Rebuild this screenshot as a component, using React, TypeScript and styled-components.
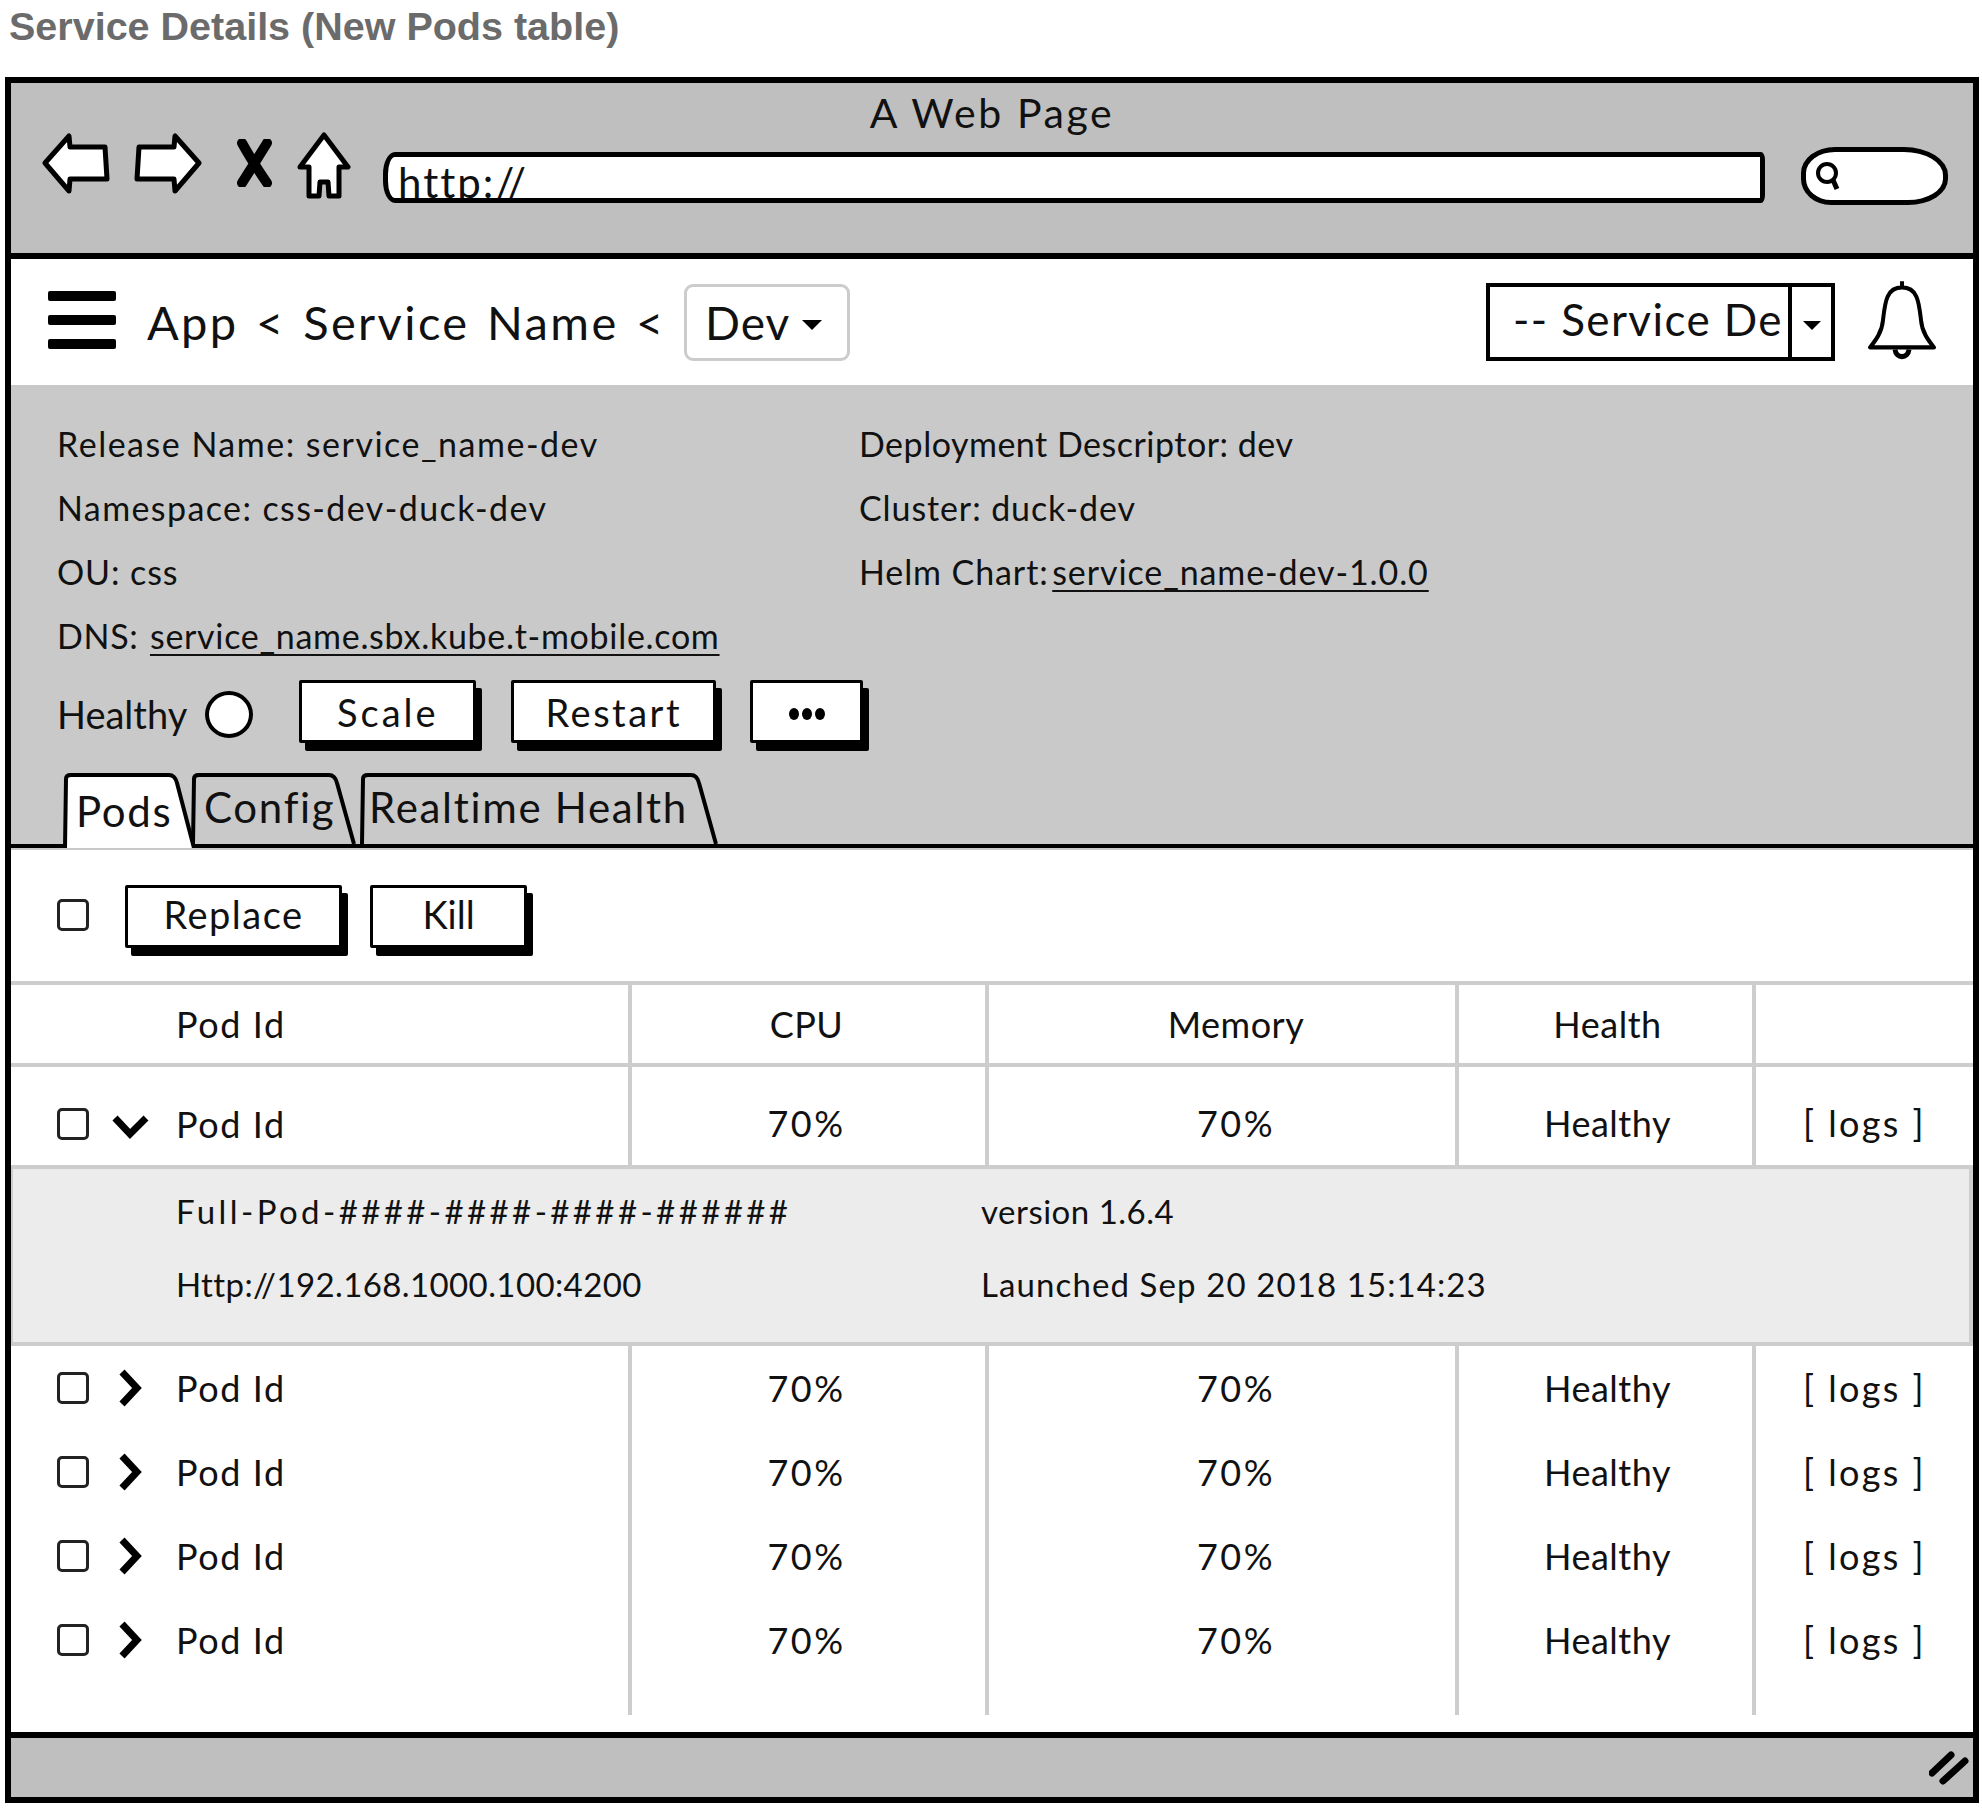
import React from 'react'
import styled, { createGlobalStyle } from 'styled-components'

const COLUMNS = '621px 357px 470px 297px 1fr'
const INK = '#111111'
const RULE = '#cdcdcd'

const GlobalStyle = createGlobalStyle`
    html, body {
        margin: 0;
        padding: 0;
        background: #ffffff;
    }
    body {
        font-family: Lato, 'Liberation Sans', sans-serif;
        color: ${INK};
    }
`

const Page = styled.div`
    width: 1982px;
    height: 1808px;
    padding: 0 3px 0 5px;
    box-sizing: border-box;
`

const PageTitle = styled.h1`
    margin: 0;
    height: 77px;
    padding: 4px 0 0 4px;
    box-sizing: border-box;
    font-family: 'Liberation Sans', Arial, sans-serif;
    font-size: 39.5px;
    line-height: 44px;
    font-weight: 700;
    color: #6b6b6b;
`

const Frame = styled.div`
    height: 1726px;
    border: 6px solid #000000;
    box-sizing: border-box;
    display: flex;
    flex-direction: column;
    background: #ffffff;
`

const BrowserBar = styled.div`
    height: 176px;
    flex: none;
    box-sizing: border-box;
    background: #bfbfbf;
    border-bottom: 6px solid #000000;
`

const BrowserTitle = styled.div`
    padding-top: 10px;
    height: 50px;
    box-sizing: border-box;
    text-align: center;
    font-size: 41px;
    line-height: 40px;
    letter-spacing: 2.6px;
`

const NavRow = styled.div`
    display: flex;
    align-items: flex-start;
    padding-left: 31px;
`

const NavIcon = styled.svg<{ $left: number; $top: number }>`
    flex: none;
    margin-left: ${({ $left }) => $left}px;
    margin-top: ${({ $top }) => $top}px;
`

const UrlBar = styled.div`
    width: 1382px;
    height: 51px;
    margin: 19px 0 0 32px;
    flex: none;
    box-sizing: border-box;
    background: #ffffff;
    border: 5px solid #000000;
    border-radius: 12px 4px 4px 12px / 22px 8px 8px 22px;
    overflow: hidden;
    padding-left: 10px;
    font-size: 42px;
    line-height: 50px;
    letter-spacing: 2px;
`

const SearchPill = styled.div`
    width: 147px;
    height: 58px;
    margin: 14px 0 0 36px;
    flex: none;
    box-sizing: border-box;
    background: #ffffff;
    border: 5px solid #000000;
    border-radius: 34px 44px 40px 30px / 26px 28px 26px 26px;
    display: flex;
    align-items: center;
    padding-left: 8px;
`

const AppHeader = styled.div`
    height: 126px;
    flex: none;
    box-sizing: border-box;
    display: flex;
    align-items: center;
    padding: 0 35px 0 37px;
`

const MenuButton = styled.div`
    width: 68px;
    display: flex;
    flex-direction: column;
    gap: 14px;
    margin: 0 31px 5px 0;
`

const MenuBar = styled.span`
    display: block;
    height: 10px;
    border-radius: 2px;
    background: #000000;
`

const Crumbs = styled.div`
    width: 537px;
    flex: none;
    font-size: 47px;
    line-height: 56px;
    white-space: pre;
    letter-spacing: 2.4px;
    word-spacing: 3px;
`

const EnvSelect = styled.div`
    width: 166px;
    height: 77px;
    box-sizing: border-box;
    border: 3px solid #cccccc;
    border-radius: 9px;
    display: flex;
    align-items: center;
    gap: 12px;
    padding-left: 18px;
    font-size: 46px;
    letter-spacing: 1px;
`

const Caret = styled.span<{ $size: number }>`
    width: 0;
    height: 0;
    border-left: ${({ $size }) => $size}px solid transparent;
    border-right: ${({ $size }) => $size}px solid transparent;
    border-top: ${({ $size }) => $size}px solid #000000;
    margin-top: 6px;
`

const Spacer = styled.div`
    flex: 1;
`

const PageSelect = styled.div`
    width: 349px;
    height: 78px;
    box-sizing: border-box;
    border: 4px solid #000000;
    display: flex;
    align-items: stretch;
    font-size: 44px;
    line-height: 64px;
    letter-spacing: 1.4px;
`

const PageSelectValue = styled.div`
    width: 302px;
    flex: none;
    box-sizing: border-box;
    padding-left: 23px;
    white-space: nowrap;
    border-right: 4px solid #000000;
`

const PageSelectArrow = styled.div`
    flex: 1;
    display: flex;
    align-items: center;
    justify-content: center;
`

const BellIcon = styled.svg`
    flex: none;
    margin: -6px 0 0 32px;
`

const ServiceInfo = styled.div`
    height: 465px;
    flex: none;
    box-sizing: border-box;
    background: #c9c9c9;
    padding-top: 27px;
    display: flex;
    flex-direction: column;
`

const InfoGrid = styled.div`
    display: grid;
    grid-template-columns: 802px 1fr;
    grid-auto-rows: 64px;
    padding-left: 46px;
    font-size: 34px;
    line-height: 64px;
`

const InfoItem = styled.div<{ $spacing?: number }>`
    letter-spacing: ${({ $spacing = 0.9 }) => $spacing}px;
`

const InfoLink = styled.span<{ $inset: number }>`
    margin-left: ${({ $inset }) => $inset}px;
    text-decoration: underline;
    text-underline-offset: 5px;
    text-decoration-thickness: 2px;
`

const ActionRow = styled.div`
    display: flex;
    align-items: flex-start;
    margin-top: 12px;
    padding-left: 46px;
    height: 70px;
`

const HealthLabel = styled.div`
    font-size: 38px;
    line-height: 68px;
    margin-right: 18px;
`

const HealthDot = styled.span`
    width: 48px;
    height: 47px;
    margin-top: 11px;
    box-sizing: border-box;
    border: 4px solid #000000;
    border-radius: 50%;
    background: #ffffff;
    margin-right: 46px;
`

const SketchButton = styled.button<{ $width: number; $gap: number; $lift?: number; $spacing?: number }>`
    width: ${({ $width }) => $width}px;
    height: 63px;
    margin-right: ${({ $gap }) => $gap}px;
    box-sizing: border-box;
    padding: 0 0 ${({ $lift = 0 }) => $lift}px;
    background: #ffffff;
    border: 3px solid #000000;
    box-shadow: 6px 8px 0 #000000;
    border-radius: 2px;
    font-family: inherit;
    font-size: 38px;
    letter-spacing: ${({ $spacing = 1.5 }) => $spacing}px;
    color: ${INK};
    display: flex;
    align-items: center;
    justify-content: center;
`

const Dots = styled.span`
    display: flex;
    gap: 3px;
    margin-top: 4px;
`

const Dot = styled.i`
    width: 10px;
    height: 12px;
    border-radius: 50%;
    background: #000000;
`

const TabBar = styled.div`
    margin-top: 23px;
    height: 75px;
    padding-left: 52px;
    box-sizing: border-box;
    border-bottom: 4px solid #000000;
    display: flex;
    align-items: flex-start;
`

const Tab = styled.div<{ $width: number; $left: number; $active?: boolean; $inset: number }>`
    position: relative;
    flex: none;
    width: ${({ $width }) => $width}px;
    height: ${({ $active }) => ($active ? 75 : 71)}px;
    margin-left: ${({ $left }) => $left}px;
    z-index: ${({ $active }) => ($active ? 1 : 0)};
    box-sizing: border-box;
    padding: ${({ $active }) => ($active ? 13 : 9)}px 0 0 ${({ $inset }) => $inset}px;
    font-size: 42px;
    line-height: 50px;
    letter-spacing: 1.7px;
    white-space: nowrap;
`

const TabShape = styled.svg`
    position: absolute;
    inset: 0;
    z-index: -1;
`

const PodActions = styled.div`
    height: 131px;
    flex: none;
    box-sizing: border-box;
    display: flex;
    align-items: flex-start;
    padding: 35px 0 0 46px;
`

const CheckBox = styled.span`
    flex: none;
    width: 32px;
    height: 32px;
    box-sizing: border-box;
    border: 3px solid #222222;
    border-radius: 5px;
    background: #ffffff;
`

const ToolbarCheck = styled(CheckBox)`
    margin: 14px 36px 0 0;
`

const PodsTable = styled.div`
    flex: 1;
    display: flex;
    flex-direction: column;
    border-top: 4px solid ${RULE};
    font-size: 36px;
    letter-spacing: 0.5px;
`

const Row = styled.div<{ $height: number; $header?: boolean }>`
    height: ${({ $height }) => $height}px;
    flex: none;
    box-sizing: border-box;
    display: grid;
    grid-template-columns: ${COLUMNS};
    border-bottom: ${({ $header }) => ($header ? `4px solid ${RULE}` : 'none')};
`

const Cell = styled.div<{ $shift?: number; $offset?: number; $trim?: number; $last?: boolean }>`
    box-sizing: border-box;
    display: flex;
    align-items: center;
    justify-content: center;
    padding-top: ${({ $shift = 0 }) => $shift}px;
    padding-left: ${({ $offset = 0 }) => $offset}px;
    padding-right: ${({ $trim = 0 }) => $trim}px;
    border-right: ${({ $last }) => ($last ? 'none' : `4px solid ${RULE}`)};
`

const PodCell = styled(Cell)`
    justify-content: flex-start;
    padding-left: 46px;
`

const HeaderPodCell = styled(Cell)`
    justify-content: flex-start;
    padding-left: 165px;
`

const PodLabel = styled.span`
    letter-spacing: 1.6px;
`

const Percent = styled.span`
    letter-spacing: 2.4px;
`

const LogsLink = styled.span`
    letter-spacing: 2.4px;
`

const PodCheck = styled(CheckBox)`
    margin-right: 22px;
`

const ChevronSlot = styled.svg`
    flex: none;
    width: 39px;
    height: 40px;
    margin-right: 26px;
`

const PodDetails = styled.div`
    height: 181px;
    flex: none;
    box-sizing: border-box;
    background: #ececec;
    border: 4px solid ${RULE};
    border-left-width: 2px;
    display: grid;
    grid-template-columns: 805px 1fr;
    grid-auto-rows: 73px;
    padding: 5px 0 0 163px;
    align-items: center;
    font-size: 33px;
`

const DetailText = styled.div<{ $spacing: number }>`
    letter-spacing: ${({ $spacing }) => $spacing}px;
`

const StatusBar = styled.div`
    margin-top: auto;
    flex: none;
    height: 65px;
    box-sizing: border-box;
    background: #bfbfbf;
    border-top: 6px solid #000000;
    display: flex;
    justify-content: flex-end;
    align-items: center;
    padding-right: 4px;
`

type Pod = {
    expanded: boolean
}

const pods: Pod[] = [
    { expanded: true },
    { expanded: false },
    { expanded: false },
    { expanded: false },
    { expanded: false },
]

const TabOutline: React.FC<{ width: number; height: number; fill: string }> = ({ width, height, fill }) => (
    <TabShape width={width} height={height} viewBox={`0 0 ${width} ${height}`}>
        <path
            d={`M2 ${height} L3 6 Q3 2 8 2 L${width - 28} 2 Q${width - 22} 2 ${width - 20} 10 L${width - 3} ${height}`}
            fill={fill}
            stroke="#000"
            strokeWidth="4"
        />
    </TabShape>
)

const PodRow: React.FC<{ pod: Pod }> = ({ pod }) => (
    <Row $height={pod.expanded ? 98 : 84}>
        <PodCell $shift={pod.expanded ? 16 : 0}>
            <PodCheck />
            <ChevronSlot viewBox="0 0 39 40">
                {pod.expanded ? (
                    <path d="M4 14 L19 30 L35 14" fill="none" stroke="#000" strokeWidth="7" />
                ) : (
                    <path d="M11 4 L26 20 L11 36" fill="none" stroke="#000" strokeWidth="7" />
                )}
            </ChevronSlot>
            <PodLabel>Pod Id</PodLabel>
        </PodCell>
        <Cell $shift={pod.expanded ? 14 : 0} $trim={4}><Percent>70%</Percent></Cell>
        <Cell $shift={pod.expanded ? 14 : 0} $offset={28}><Percent>70%</Percent></Cell>
        <Cell $shift={pod.expanded ? 14 : 0} $offset={4}>Healthy</Cell>
        <Cell $shift={pod.expanded ? 14 : 0} $last><LogsLink>[ logs ]</LogsLink></Cell>
    </Row>
)

export default function App() {
    return (
        <Page>
            <GlobalStyle />
            <PageTitle>Service Details (New Pods table)</PageTitle>
            <Frame>
                <BrowserBar>
                    <BrowserTitle>A Web Page</BrowserTitle>
                    <NavRow>
                        <NavIcon $left={0} $top={-1} width="68" height="62" viewBox="0 0 68 62">
                            <path d="M3 31 L27 4 L28 15 L63 15 L65 47 L28 47 L27 59 Z" fill="#fff" stroke="#000" strokeWidth="5" strokeLinejoin="round" />
                        </NavIcon>
                        <NavIcon $left={24} $top={-1} width="68" height="62" viewBox="0 0 68 62">
                            <path d="M65 31 L41 4 L40 15 L5 15 L3 47 L40 47 L41 59 Z" fill="#fff" stroke="#000" strokeWidth="5" strokeLinejoin="round" />
                        </NavIcon>
                        <NavIcon $left={34} $top={6} width="37" height="48" viewBox="0 0 37 48">
                            <path d="M6 4 Q16 22 31 44 M31 4 Q20 22 6 44" fill="none" stroke="#000" strokeWidth="10" strokeLinecap="round" />
                        </NavIcon>
                        <NavIcon $left={24} $top={-1} width="54" height="67" viewBox="0 0 54 67">
                            <path d="M27 3 L51 35 L42 35 L42 64 L32 64 L31 50 L23 50 L22 64 L12 64 L12 35 L3 35 Z" fill="#fff" stroke="#000" strokeWidth="5" strokeLinejoin="round" />
                        </NavIcon>
                        <UrlBar>http://</UrlBar>
                        <SearchPill>
                            <svg width="28" height="32" viewBox="0 0 28 32">
                                <circle cx="13" cy="13" r="9" fill="none" stroke="#000" strokeWidth="4" />
                                <path d="M19 20 L23 29" stroke="#000" strokeWidth="5" />
                            </svg>
                        </SearchPill>
                    </NavRow>
                </BrowserBar>
                <AppHeader>
                    <MenuButton>
                        <MenuBar />
                        <MenuBar />
                        <MenuBar />
                    </MenuButton>
                    <Crumbs>App &lt; Service Name &lt;</Crumbs>
                    <EnvSelect>
                        Dev <Caret $size={10} />
                    </EnvSelect>
                    <Spacer />
                    <PageSelect>
                        <PageSelectValue>-- Service De</PageSelectValue>
                        <PageSelectArrow>
                            <Caret $size={9} />
                        </PageSelectArrow>
                    </PageSelect>
                    <BellIcon width="71" height="82" viewBox="0 0 71 78" preserveAspectRatio="none">
                        <path d="M35 3 L35 9 M35 9 C19 9 18 24 16 40 C15 52 8 60 3 66 L67 66 C62 60 55 52 54 40 C52 24 51 9 35 9 Z" fill="#fff" stroke="#000" strokeWidth="4" strokeLinejoin="round" />
                        <path d="M28 68 C29 77 41 77 42 68" fill="none" stroke="#000" strokeWidth="5" />
                    </BellIcon>
                </AppHeader>
                <ServiceInfo>
                    <InfoGrid>
                        <InfoItem $spacing={1.5}>Release Name: service_name-dev</InfoItem>
                        <InfoItem $spacing={0.5}>Deployment Descriptor: dev</InfoItem>
                        <InfoItem $spacing={1.4}>Namespace: css-dev-duck-dev</InfoItem>
                        <InfoItem>Cluster: duck-dev</InfoItem>
                        <InfoItem>OU: css</InfoItem>
                        <InfoItem>
                            Helm Chart: <InfoLink $inset={-6}>service_name-dev-1.0.0</InfoLink>
                        </InfoItem>
                        <InfoItem $spacing={0.7}>
                            DNS: <InfoLink $inset={2}>service_name.sbx.kube.t-mobile.com</InfoLink>
                        </InfoItem>
                    </InfoGrid>
                    <ActionRow>
                        <HealthLabel>Healthy</HealthLabel>
                        <HealthDot />
                        <SketchButton $width={177} $gap={35} $spacing={3}>Scale</SketchButton>
                        <SketchButton $width={205} $gap={34} $spacing={2.5}>Restart</SketchButton>
                        <SketchButton $width={113} $gap={0}>
                            <Dots>
                                <Dot />
                                <Dot />
                                <Dot />
                            </Dots>
                        </SketchButton>
                    </ActionRow>
                    <TabBar>
                        <Tab $width={134} $left={0} $active $inset={13}>
                            <TabOutline width={134} height={75} fill="#ffffff" />
                            Pods
                        </Tab>
                        <Tab $width={166} $left={-6} $inset={13}>
                            <TabOutline width={166} height={71} fill="#c9c9c9" />
                            Config
                        </Tab>
                        <Tab $width={359} $left={3} $inset={9}>
                            <TabOutline width={359} height={71} fill="#c9c9c9" />
                            Realtime Health
                        </Tab>
                    </TabBar>
                </ServiceInfo>
                <PodActions>
                    <ToolbarCheck />
                    <SketchButton $width={217} $gap={28} $lift={6}>Replace</SketchButton>
                    <SketchButton $width={157} $gap={0} $lift={6} $spacing={0}>Kill</SketchButton>
                </PodActions>
                <PodsTable>
                    <Row $height={82} $header>
                        <HeaderPodCell>
                            <PodLabel>Pod Id</PodLabel>
                        </HeaderPodCell>
                        <Cell $trim={4}>CPU</Cell>
                        <Cell $offset={28}>Memory</Cell>
                        <Cell $offset={4}>Health</Cell>
                        <Cell $last />
                    </Row>
                    {pods.slice(0, 1).map((pod, i) => (
                        <PodRow key={i} pod={pod} />
                    ))}
                    <PodDetails>
                        <DetailText $spacing={3.4}>Full-Pod-####-####-####-######</DetailText>
                        <DetailText $spacing={0.5}>version 1.6.4</DetailText>
                        <DetailText $spacing={0.4}>Http://192.168.1000.100:4200</DetailText>
                        <DetailText $spacing={1.1}>Launched Sep 20 2018 15:14:23</DetailText>
                    </PodDetails>
                    {pods.slice(1).map((pod, i) => (
                        <PodRow key={i} pod={pod} />
                    ))}
                    <Row $height={33}>
                        <Cell />
                        <Cell />
                        <Cell />
                        <Cell />
                        <Cell $last />
                    </Row>
                    <StatusBar>
                        <svg width="40" height="34" viewBox="0 0 40 34">
                            <path d="M3 22 L22 4 M14 30 L36 10" stroke="#000" strokeWidth="7" strokeLinecap="round" />
                        </svg>
                    </StatusBar>
                </PodsTable>
            </Frame>
        </Page>
    )
}
